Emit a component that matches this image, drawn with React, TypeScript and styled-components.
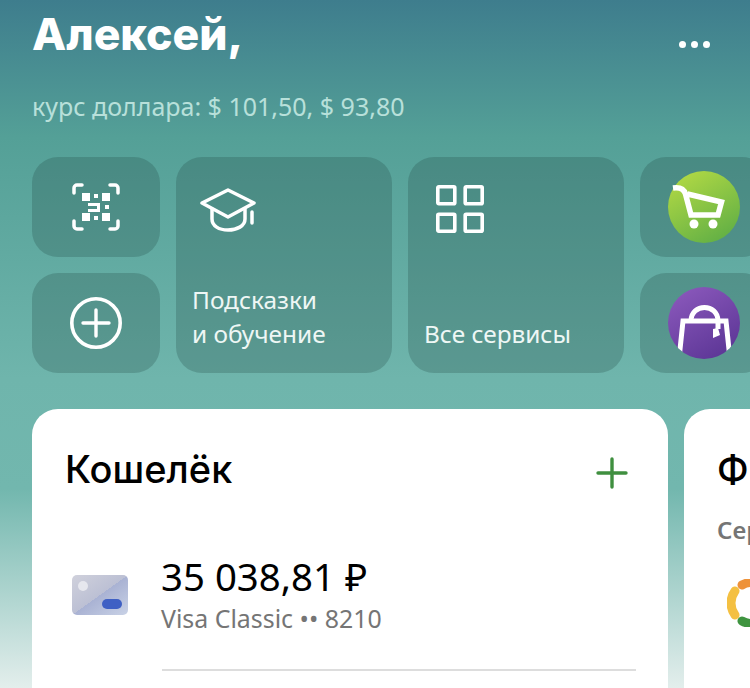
import React from "react";
import styled, { createGlobalStyle } from "styled-components";

const GlobalStyle = createGlobalStyle`
	html, body {
		margin: 0;
		padding: 0;
		overflow: hidden;
	}
	#root {
		width: 750px;
		height: 688px;
	}
`;

const Screen = styled.div`
	width: 750px;
	height: 688px;
	overflow: hidden;
	box-sizing: border-box;
	padding: 8px 0 0 32px;
	background: linear-gradient(180deg, #3e7d8d 0%, #54a097 20%, #6fb5ac 55%, #72b7ae 71%, #e3eeec 100%);
	font-family: "Noto Sans", "Open Sans", sans-serif;
`;

const Header = styled.div`
	display: flex;
	align-items: flex-start;
	justify-content: space-between;
	width: 678px;
	height: 55px;
`;

const Title = styled.h1`
	margin: 0;
	font-family: Inter, sans-serif;
	font-size: 44.5px;
	line-height: 52px;
	font-weight: 800;
	color: #ffffff;
`;

const Dots = styled.div`
	display: flex;
	gap: 5px;
	margin-top: 33px;
`;

const Dot = styled.span`
	width: 7px;
	height: 7px;
	border-radius: 50%;
	background: #ffffff;
`;

const Rates = styled.div`
	margin-top: 26px;
	font-size: 25px;
	line-height: 34px;
	color: #b8e0da;
`;

const TileGrid = styled.div`
	display: grid;
	grid-template-columns: 128px 216px 216px 128px;
	grid-template-rows: 100px 100px;
	gap: 16px;
	margin-top: 34px;
`;

const Tile = styled.div<{ $tall?: boolean }>`
	display: flex;
	flex-direction: column;
	justify-content: ${(props) => (props.$tall ? "space-between" : "center")};
	align-items: ${(props) => (props.$tall ? "flex-start" : "center")};
	grid-row: ${(props) => (props.$tall ? "span 2" : "auto")};
	box-sizing: border-box;
	padding: ${(props) => (props.$tall ? "28px 16px 22px" : "0")};
	border-radius: 26px;
	background: rgba(35, 75, 68, 0.26);
`;

const TileIcon = styled.div<{ $left: number; $top: number }>`
	display: flex;
	margin: ${(props) => props.$top}px 0 0 ${(props) => props.$left}px;
`;

const TileLabel = styled.div`
	font-size: 24.4px;
	line-height: 34px;
	color: #eef7f5;
	white-space: pre-line;
`;

const CardRow = styled.div`
	display: flex;
	gap: 16px;
	margin-top: 36px;
`;

const Card = styled.section<{ $width: number }>`
	flex: 0 0 ${(props) => props.$width}px;
	box-sizing: border-box;
	height: 400px;
	padding: 37px 32px 0 33px;
	border-radius: 26px;
	background: #ffffff;
`;

const CardHead = styled.div`
	display: flex;
	align-items: center;
	justify-content: space-between;
	padding-right: 8px;
`;

const CardTitle = styled.h2`
	margin: 0;
	font-family: Inter, sans-serif;
	font-size: 38px;
	line-height: 46px;
	font-weight: 500;
	color: #000000;
`;

const PlusSvg = styled.svg`
	margin-top: 8px;
`;

const AccountRow = styled.div`
	display: flex;
	align-items: center;
	gap: 33px;
	margin-top: 61px;
	padding-left: 7px;
`;

const AccountText = styled.div`
	display: flex;
	flex-direction: column;
`;

const Amount = styled.div`
	font-size: 38.4px;
	line-height: 46px;
	color: #000000;
`;

const AccountName = styled.div`
	font-size: 24.9px;
	line-height: 38px;
	color: #757575;
`;

const Divider = styled.div`
	height: 2px;
	margin: 32px 0 0 97px;
	background: #dddddd;
`;

const SideCaption = styled.div`
	margin-top: 21px;
	font-size: 24px;
	line-height: 34px;
	font-weight: 600;
	color: #757575;
`;

const Donut = styled.svg`
	display: block;
	margin-top: 32px;
	margin-left: 10px;
`;

const QrIcon = () => (
	<svg width="48" height="48" viewBox="0 0 48 48" fill="#fff">
		<g fill="none" stroke="#fff" strokeWidth="3.5" strokeLinecap="round">
			<path d="M2 10V5a3 3 0 0 1 3-3h5" />
			<path d="M38 2h5a3 3 0 0 1 3 3v5" />
			<path d="M2 38v5a3 3 0 0 0 3 3h5" />
			<path d="M38 46h5a3 3 0 0 0 3-3v-5" />
		</g>
		<rect x="10" y="10" width="8" height="8" />
		<rect x="30" y="10" width="8" height="8" />
		<rect x="10" y="30" width="8" height="8" />
		<rect x="30" y="30" width="8" height="8" />
		<rect x="22" y="11" width="4" height="4" />
		<rect x="22" y="33" width="4" height="4" />
		<rect x="16" y="20" width="12" height="3" />
		<rect x="16" y="26" width="12" height="3" />
		<rect x="25" y="22" width="3" height="5" />
		<rect x="33" y="22" width="4" height="4" />
	</svg>
);

const CapIcon = () => (
	<svg width="56" height="44" viewBox="0 0 56 44" fill="none" stroke="#fff" strokeWidth="3.5" strokeLinejoin="round" strokeLinecap="round">
		<path d="M2 15 28 2l26 13-26 14z" />
		<path d="M12 21v10c0 7 7 11 16 11s17-4 17-11V21" />
		<path d="M52 24v11" />
	</svg>
);

const PlusCircleIcon = () => (
	<svg width="52" height="52" viewBox="0 0 52 52" fill="none" stroke="#fff" strokeLinecap="round">
		<circle cx="26" cy="26" r="24.2" strokeWidth="3.6" />
		<path d="M26 13v26M13 26h26" strokeWidth="3.4" />
	</svg>
);

const GridIcon = () => (
	<svg width="48" height="48" viewBox="0 0 48 48" fill="none" stroke="#fff" strokeWidth="3.6" strokeLinejoin="round">
		<rect x="1.8" y="1.8" width="17" height="17" rx="1" />
		<rect x="29.2" y="1.8" width="17" height="17" rx="1" />
		<rect x="1.8" y="29.2" width="17" height="17" rx="1" />
		<rect x="29.2" y="29.2" width="17" height="17" rx="1" />
	</svg>
);

const CartLogo = () => (
	<svg width="72" height="72" viewBox="0 0 72 72">
		<defs>
			<linearGradient id="cartBg" x1="0.2" y1="0" x2="0.8" y2="1">
				<stop offset="0" stopColor="#b2d944" />
				<stop offset="1" stopColor="#5fae45" />
			</linearGradient>
		</defs>
		<circle cx="36" cy="36" r="36" fill="url(#cartBg)" />
		<path d="M5 17c7-1 11 1 12.500 6L23 44h27l3.500-13-34-8" fill="none" stroke="#fff" strokeWidth="5.500" strokeLinejoin="miter" />
		<circle cx="26" cy="53" r="4.500" fill="#fff" />
		<circle cx="45" cy="53" r="4.500" fill="#fff" />
	</svg>
);

const BagLogo = () => (
	<svg width="72" height="72" viewBox="0 0 72 72">
		<defs>
			<linearGradient id="bagBg" x1="0.2" y1="0" x2="0.8" y2="1">
				<stop offset="0" stopColor="#8a58bb" />
				<stop offset="1" stopColor="#5b3595" />
			</linearGradient>
			<clipPath id="bagClip">
				<circle cx="36" cy="36" r="36" />
			</clipPath>
		</defs>
		<circle cx="36" cy="36" r="36" fill="url(#bagBg)" />
		<g clipPath="url(#bagClip)" fill="none" stroke="#fff" strokeWidth="5">
			<path d="M11 72l4-38h43l4 38" />
			<path d="M23 34c0-18 27-18 27 0v8" />
		</g>
		<path d="M45 42l5-1 2 7-7 3z" fill="#fff" />
	</svg>
);

const GreenPlus = () => (
	<PlusSvg width="32" height="32" viewBox="0 0 32 32" stroke="#3f8f3f" strokeWidth="3.4" strokeLinecap="round">
		<path d="M16 2v28M2 16h28" />
	</PlusSvg>
);

const CardIcon = () => (
	<svg width="56" height="40" viewBox="0 0 56 40">
		<defs>
			<linearGradient id="cardBg" x1="0" y1="0" x2="1" y2="1">
				<stop offset="0" stopColor="#d0d1dc" />
				<stop offset="0.5" stopColor="#bcc0d4" />
				<stop offset="0.5" stopColor="#a9b2d3" />
				<stop offset="1" stopColor="#c9d2e6" />
			</linearGradient>
		</defs>
		<rect width="56" height="40" rx="5" fill="url(#cardBg)" />
		<circle cx="11" cy="11" r="5" fill="#e6e7ee" />
		<rect x="30" y="24" width="20" height="10" rx="5" fill="#3f60c4" />
	</svg>
);

export default function App() {
	return (
		<Screen>
			<GlobalStyle />
			<Header>
				<Title>Алексей,</Title>
				<Dots>
					<Dot />
					<Dot />
					<Dot />
				</Dots>
			</Header>
			<Rates>курс доллара: $ 101,50, $ 93,80</Rates>

			<TileGrid>
				<Tile>
					<QrIcon />
				</Tile>
				<Tile $tall>
					<TileIcon $left={8} $top={3}>
						<CapIcon />
					</TileIcon>
					<TileLabel>{"Подсказки\nи обучение"}</TileLabel>
				</Tile>
				<Tile $tall>
					<TileIcon $left={12} $top={0}>
						<GridIcon />
					</TileIcon>
					<TileLabel>Все сервисы</TileLabel>
				</Tile>
				<Tile>
					<CartLogo />
				</Tile>
				<Tile>
					<PlusCircleIcon />
				</Tile>
				<Tile>
					<BagLogo />
				</Tile>
			</TileGrid>

			<CardRow>
				<Card $width={636}>
					<CardHead>
						<CardTitle>Кошелёк</CardTitle>
						<GreenPlus />
					</CardHead>
					<AccountRow>
						<CardIcon />
						<AccountText>
							<Amount>35 038,81 ₽</Amount>
							<AccountName>Visa Classic •• 8210</AccountName>
						</AccountText>
					</AccountRow>
					<Divider />
				</Card>
				<Card $width={400}>
					<CardTitle>Финансы</CardTitle>
					<SideCaption>Сервисы</SideCaption>
					<Donut width="48" height="48" viewBox="0 0 48 48" fill="none" strokeWidth="9" strokeLinecap="round">
						<path d="M8 12a20 20 0 0 0 0 24" stroke="#f4c042" />
						<path d="M15 6a20 20 0 0 1 14-2" stroke="#ee9239" />
						<path d="M15 42a20 20 0 0 0 14 2" stroke="#3f9440" />
					</Donut>
				</Card>
			</CardRow>
		</Screen>
	);
}
